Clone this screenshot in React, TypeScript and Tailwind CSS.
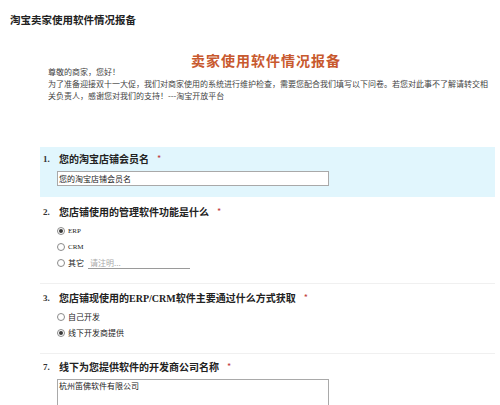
import React from 'react';

const Radio: React.FC<{ checked?: boolean }> = ({ checked }) => (
  <span className="w-[8px] h-[8px] rounded-full border border-[#8a8a8a] bg-white flex items-center justify-center shrink-0">
    {checked && <span className="w-[4px] h-[4px] rounded-full bg-[#3a3a3a]" />}
  </span>
);

const Question: React.FC<{ no: string; text: React.ReactNode }> = ({ no, text }) => (
  <div className="flex items-center h-[14px] leading-[14px]">
    <span className="w-[19px] pl-[3px] text-[9px] font-bold text-[#333] font-['Liberation_Serif',serif]">{no}</span>
    <span className="text-[10px] font-bold text-[#222]">{text}</span>
    <span className="ml-[8px] text-[9px] text-[#c0393b]">*</span>
  </div>
);

const App: React.FC = () => {
  return (
    <div className="w-[500px] h-[405px] bg-white overflow-hidden font-['Noto_Sans_CJK_SC','Noto_Sans',sans-serif] text-[#333]">
      {/* Page title */}
      <h1 className="mt-[13px] ml-[10px] text-[10.5px] leading-[14px] font-bold text-[#222]">淘宝卖家使用软件情况报备</h1>

      {/* Survey heading */}
      <div className="mt-[27px] flex justify-center pl-[32px]">
        <h2 className="text-[14px] leading-[12px] font-bold tracking-[1px] text-[#c8592e]">卖家使用软件情况报备</h2>
      </div>

      {/* Intro */}
      <div className="mt-0 pl-[48px] text-[8px] leading-[12px] text-[#444] whitespace-nowrap">
        尊敬的商家，您好！<br />
        为了准备迎接双十一大促，我们对商家使用的系统进行维护检查，需要您配合我们填写以下问卷。若您对此事不了解请转交相<br />
        关负责人，感谢您对我们的支持！---淘宝开放平台
      </div>

      {/* Q1 */}
      <section className="mt-[45px] ml-[40px] w-[455px] h-[50px] bg-[#e1f6fd] pt-[5px]">
        <Question no="1." text="您的淘宝店铺会员名" />
        <div className="mt-[5px] ml-[17px] w-[272px] h-[15px] border border-[#a9a9a9] bg-white text-[8px] leading-[13px] pl-[1px] text-[#222]">
          您的淘宝店铺会员名
        </div>
      </section>

      {/* Q2 */}
      <section className="ml-[40px] w-[455px] pt-[8px] pb-[12px] border-b border-[#f0f0f0]">
        <Question no="2." text="您店铺使用的管理软件功能是什么" />
        <div className="mt-[4px] ml-[17px] flex flex-col">
          <label className="h-[16px] flex items-center gap-[3px]">
            <Radio checked />
            <span className="text-[7px] font-['Liberation_Serif',serif] text-[#222]">ERP</span>
          </label>
          <label className="h-[16px] flex items-center gap-[3px]">
            <Radio />
            <span className="text-[7px] font-['Liberation_Serif',serif] text-[#222]">CRM</span>
          </label>
          <label className="h-[16px] flex items-center gap-[3px]">
            <Radio />
            <span className="text-[8px] text-[#222]">其它</span>
            <span className="ml-[1px] w-[102px] border-b border-[#9a9a9a] text-[8px] leading-[11px] text-[#aaa] pl-[2px]">请注明...</span>
          </label>
        </div>
      </section>

      {/* Q3 */}
      <section className="ml-[40px] w-[455px] pt-[7px] pb-[13px] border-b border-[#f0f0f0]">
        <Question
          no="3."
          text={
            <>
              您店铺现使用的<span className="font-['Liberation_Serif',serif]">ERP/CRM</span>软件主要通过什么方式获取
            </>
          }
        />
        <div className="mt-[4px] ml-[17px] flex flex-col">
          <label className="h-[16px] flex items-center gap-[3px]">
            <Radio />
            <span className="text-[8px] text-[#222]">自己开发</span>
          </label>
          <label className="h-[15px] flex items-center gap-[3px]">
            <Radio checked />
            <span className="text-[8px] text-[#222]">线下开发商提供</span>
          </label>
        </div>
      </section>

      {/* Q7 */}
      <section className="ml-[40px] w-[455px] pt-[6px]">
        <Question no="7." text="线下为您提供软件的开发商公司名称" />
        <div className="mt-[5px] ml-[17px] w-[272px] h-[40px] border border-[#a9a9a9] bg-white text-[8px] leading-[12px] pl-[1px] text-[#222]">
          杭州笛佛软件有限公司
        </div>
      </section>
    </div>
  );
};

export default App;
